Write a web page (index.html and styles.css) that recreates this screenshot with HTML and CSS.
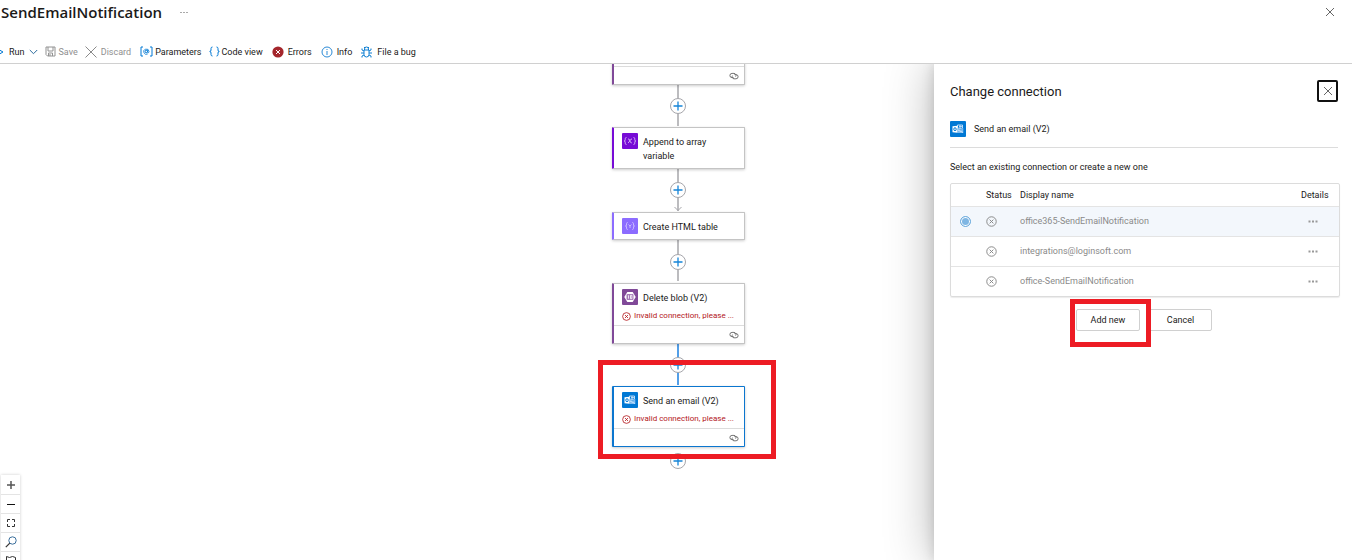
FILE: index.html
```html
<!DOCTYPE html>
<html lang="en">
<head>
<meta charset="utf-8">
<title>SendEmailNotification</title>
<link rel="stylesheet" href="styles.css">
</head>
<body>
<svg class="defs" aria-hidden="true">
  <symbol id="i-link" viewBox="0 0 10 8"><path d="M4.600 5.600H3A2 2 0 0 1 3 1.400h2a2 2 0 0 1 1.600 3.200M5.400 2.600H7a2 2 0 0 1 0 4.200H5A2 2 0 0 1 3.500 3.600" fill="none" stroke="#666" stroke-width=".9"/></symbol>
  <symbol id="i-fail" viewBox="0 0 10 10"><circle cx="5" cy="5" r="4.300" fill="none" stroke="currentColor" stroke-width=".9"/><path d="M3.300 3.300l3.400 3.400M6.700 3.300L3.300 6.700" stroke="currentColor" stroke-width=".9"/></symbol>
  <symbol id="i-plus" viewBox="0 0 14 14"><path d="M7 2.500v9M2.500 7h9" stroke="#1584d8" stroke-width="1.300"/></symbol>
  <symbol id="i-close" viewBox="0 0 10 10"><path d="M1 1l8 8M9 1L1 9" stroke="currentColor" stroke-width="1"/></symbol>
  <symbol id="i-outlook" viewBox="0 0 16 16"><rect width="16" height="16" rx="1" fill="#0078d4"/><path d="M7.500 4h5v3.200h-5z" fill="none" stroke="#cfe6fa" stroke-width=".9"/><path d="M7.500 7l2.700 2L13.300 7v5H7.500z" fill="#7fbcf0"/><path d="M9 5.500h3M8 9l5 2.500M10 4v5" stroke="#e8f4ff" stroke-width=".7"/><path d="M2.500 5.200L7.500 4.700v7L2.500 11.200z" fill="#fff"/><ellipse cx="5" cy="8.200" rx="1.200" ry="1.500" fill="none" stroke="#0078d4" stroke-width="1"/></symbol>
</svg>
<header class="top">
  <h1 class="title">SendEmailNotification</h1>
  <button class="plain more" aria-label="More options"><svg width="9" height="3" viewBox="0 0 9 3" fill="#aaa"><path d="M0 1h2v1H0zM3 1h2v1H3zM6 1h2v1H6z"/></svg></button>
  <button class="plain close-top" aria-label="Close"><svg width="10" height="10"><use href="#i-close"/></svg></button>
</header>
<nav class="toolbar">
  <button class="plain tool run"><svg width="4" height="10" viewBox="0 0 4 10"><path d="M-4 1l7 4-7 4" fill="none" stroke="#0078d4"/></svg>Run<svg class="chev" width="9" height="6" viewBox="0 0 9 6"><path d="M.8 1l3.700 3.700L8.200 1" fill="none" stroke="#2b6a9c"/></svg></button>
  <button class="plain tool save" disabled><svg width="11" height="11" viewBox="0 0 11 11"><path d="M1 1h9v9H2.500L1 8.500zM3 1v4h5V1M3.500 10V7h4v3M5 8v2" fill="none" stroke="#929292"/></svg>Save</button>
  <button class="plain tool discard" disabled><svg width="12" height="12" viewBox="0 0 12 12"><path d="M.5.500l11 11M11.500.500l-11 11" stroke="#8a8a8a"/></svg>Discard</button>
  <button class="plain tool params"><svg width="13" height="11" viewBox="0 0 13 11" fill="none" stroke="#0078d4"><path d="M3 1H1v9h2M10 1h2v9h-2"/><circle cx="6.300" cy="5.500" r="1.200"/><path d="M7.700 4v2.200c.2.900 1.300.6 1.300-.7a2.600 2.600 0 1 0-1.200 2.400" stroke-width=".8"/></svg>Parameters</button>
  <button class="plain tool code"><svg width="11" height="11" viewBox="0 0 11 11"><path d="M3.500 1Q2 1 2 2.500V4Q2 5.500.7 5.500 2 5.500 2 7v1.500Q2 10 3.500 10M7.500 1Q9 1 9 2.500V4q0 1.500 1.300 1.500Q9 5.500 9 7v1.500Q9 10 7.500 10" fill="none" stroke="#0078d4"/></svg>Code view</button>
  <button class="plain tool errors"><svg width="12" height="12" viewBox="0 0 12 12"><circle cx="6" cy="6" r="5.600" fill="#a4262c"/><path d="M4 4l4 4M8 4L4 8" stroke="#fff"/></svg>Errors</button>
  <button class="plain tool info"><svg width="12" height="12" viewBox="0 0 12 12"><circle cx="6" cy="6" r="5" fill="none" stroke="#2b8ad6"/><path d="M6 5v4M6 3v1" stroke="#2b8ad6"/></svg>Info</button>
  <button class="plain tool bug"><svg width="11" height="12" viewBox="0 0 11 12" fill="none" stroke="#0f7fd2"><path d="M3 4h5v4.500a2.500 2.500 0 0 1-5 0zM3.500 4V3a2 2 0 0 1 4 0v1M3 1l1 1M8 1L7 2M3 5L1 4V2.500M8 5l2-1V2.500M0 7h3M8 7h3M3 9l-2 1v1.500M8 9l2 1v1.500"/></svg>File a bug</button>
</nav>
<div class="work">
  <main class="canvas">
    <svg class="edges" width="900" height="420" fill="none" stroke="#a6a6ab" stroke-width="1">
      <path d="M678 21v41M678 105v42M678 176v41" stroke-width="1.500"/>
      <path d="M674.500 143l3.500 3.500 3.500-3.500"/>
      <path d="M678 280v41" stroke="#1a7fe0" stroke-width="1.500"/>
    </svg>
    <article class="node blob n1"><footer><svg width="10" height="8"><use href="#i-link"/></svg></footer></article>
    <button class="plain add a1" aria-label="Add step"><svg width="14" height="14"><use href="#i-plus"/></svg></button>
    <article class="node append n2"><div class="head"><svg width="16" height="16" viewBox="0 0 16 16"><rect width="16" height="16" rx="1" fill="#770bd6"/><path d="M4.500 4.500q-1.300 0-1.300 1.300v1.100Q3.200 8 2.200 8q1 0 1 1.100v1.100q0 1.300 1.300 1.300M11.500 4.500q1.300 0 1.300 1.300v1.100q0 1.100 1 1.100-1 0-1 1.100v1.100q0 1.300-1.300 1.300M6 6q1-.5 1.500 1l1 2.200q.5 1.200 1.300.6M10 6q-1-.4-2 1.500T6 10" fill="none" stroke="#d9b8f5" stroke-width=".9"/></svg><span>Append to array variable</span></div></article>
    <button class="plain add a2" aria-label="Add step"><svg width="14" height="14"><use href="#i-plus"/></svg></button>
    <article class="node html n3"><div class="head"><svg width="16" height="16" viewBox="0 0 16 16"><rect width="16" height="16" rx="1" fill="#8c6cff"/><path d="M5.700 4.500q-1.200 0-1.200 1.200V7q0 1-1 1 1 0 1 1v1.300q0 1.200 1.200 1.200M10.300 4.500q1.200 0 1.200 1.200V7q0 1 1 1-1 0-1 1v1.300q0 1.200-1.200 1.200M6.500 6.500L8 8l1.500-1.500M8 8v2" fill="none" stroke="#cfc2ff" stroke-width=".9"/></svg><span>Create HTML table</span></div></article>
    <button class="plain add a3" aria-label="Add step"><svg width="14" height="14"><use href="#i-plus"/></svg></button>
    <article class="node blob n4"><div class="head"><svg width="16" height="16" viewBox="0 0 16 16"><rect width="16" height="16" rx="1" fill="#804998"/><path d="M5.300 3h5.400l3 5-3 5H5.300l-3-5z" fill="#fff"/><rect x="4.500" y="5" width="7" height="6" rx="1" fill="#a57ab8"/><path d="M6.500 6.300v3.400M8.500 6.300h1.400v3.400H8.500z" stroke="#fff" stroke-width=".8" fill="none"/></svg><span>Delete blob (V2)</span></div><p class="error"><svg width="9" height="9"><use href="#i-fail"/></svg><span>Invalid connection, please ...</span></p><footer><svg width="10" height="8"><use href="#i-link"/></svg></footer></article>
    <button class="plain add a4" aria-label="Add step"><svg width="14" height="14"><use href="#i-plus"/></svg></button>
    <article class="node mail n5"><div class="head"><svg width="16" height="16"><use href="#i-outlook"/></svg><span>Send an email (V2)</span></div><p class="error"><svg width="9" height="9"><use href="#i-fail"/></svg><span>Invalid connection, please ...</span></p><footer><svg width="10" height="8"><use href="#i-link"/></svg></footer></article>
    <button class="plain add a5" aria-label="Add step"><svg width="14" height="14"><use href="#i-plus"/></svg></button>
    <div class="mark mark-node"></div>
    <div class="controls">
      <button class="plain" aria-label="Zoom in"><svg width="10" height="10" viewBox="0 0 10 10"><path d="M5 1v8M1 5h8" stroke="#555" stroke-width="1.500"/></svg></button>
      <button class="plain" aria-label="Zoom out"><svg width="10" height="10" viewBox="0 0 10 10"><path d="M1 5.500h8" stroke="#111"/></svg></button>
      <button class="plain" aria-label="Fit view"><svg width="10" height="10" viewBox="0 0 10 10"><path d="M1.500 4V1.500H4M6 1.500h2.500V4M8.500 6v2.500H6M4 8.500H1.500V6" fill="none" stroke="#333"/></svg></button>
      <button class="plain" aria-label="Search"><svg width="12" height="12" viewBox="0 0 12 12"><circle cx="7.500" cy="4.500" r="3.700" fill="none" stroke="#3b6f9c"/><path d="M4.800 7.200L.8 11.200" stroke="#333" stroke-width="1.200"/></svg></button>
      <button class="plain" aria-label="Toggle minimap"><svg width="10" height="12" viewBox="0 0 10 12"><path d="M.5 10V1.500l3 1 3-1 3 1V10l-3-1-3 1z" fill="none" stroke="#333"/></svg></button>
    </div>
  </main>
  <aside class="panel">
    <div class="panel-head"><h2>Change connection</h2><button class="plain close-panel" aria-label="Close panel"><svg width="10" height="10"><use href="#i-close"/></svg></button></div>
    <div class="action"><svg width="16" height="16"><use href="#i-outlook"/></svg>Send an email (V2)</div>
    <p class="prompt">Select an existing connection or create a new one</p>
    <div class="table-wrap">
    <table class="connections">
      <thead><tr><th class="pick"></th><th class="status">Status</th><th>Display name</th><th class="details">Details</th></tr></thead>
      <tbody>
        <tr class="selected"><td class="pick"><input type="radio" name="connection" aria-label="office365-SendEmailNotification" checked></td><td class="status"><svg width="11" height="11"><use href="#i-fail"/></svg></td><td>office365-SendEmailNotification</td><td class="details"><button class="plain" aria-label="Details"><svg width="10" height="3" viewBox="0 0 10 3"><path d="M.5.500h2v2h-2zM4 .5h2v2H4zM7.500.5h2v2h-2z" fill="#999"/></svg></button></td></tr>
        <tr><td class="pick"></td><td class="status"><svg width="11" height="11"><use href="#i-fail"/></svg></td><td>integrations@loginsoft.com</td><td class="details"><button class="plain" aria-label="Details"><svg width="10" height="3" viewBox="0 0 10 3"><path d="M.5.500h2v2h-2zM4 .5h2v2H4zM7.500.5h2v2h-2z" fill="#999"/></svg></button></td></tr>
        <tr><td class="pick"></td><td class="status"><svg width="11" height="11"><use href="#i-fail"/></svg></td><td>office-SendEmailNotification</td><td class="details"><button class="plain" aria-label="Details"><svg width="10" height="3" viewBox="0 0 10 3"><path d="M.5.500h2v2h-2zM4 .5h2v2H4zM7.500.5h2v2h-2z" fill="#999"/></svg></button></td></tr>
      </tbody>
    </table>
    </div>
    <div class="actions"><span class="add-new"><button class="btn">Add new</button><span class="mark mark-btn"></span></span><button class="btn">Cancel</button></div>
  </aside>
</div>
</body>
</html>
```
FILE: styles.css
```css
* { box-sizing: border-box; }
body {
  margin: 0;
  height: 100vh;
  display: flex;
  flex-direction: column;
  overflow: hidden;
  background: #fff;
  color: #1b1a19;
  font: 9px/14px Roboto, "Open Sans", sans-serif;
}
h1, h2, p { margin: 0; }
svg { display: block; flex: none; }
.defs { position: absolute; width: 0; height: 0; }
.plain { border: 0; padding: 0; margin: 0; background: none; font: inherit; color: inherit; }

.top { display: flex; align-items: center; height: 24px; padding: 0 17px 0 1px; }
.title { font: 600 15px/24px "Open Sans", sans-serif; }
.more { margin-left: 18px; }
.close-top { margin-left: auto; color: #666; }

.toolbar { display: flex; align-items: center; height: 40px; padding-top: 16px; border-bottom: 1px solid #d0d0d0; }
.tool { display: flex; align-items: center; gap: 5px; white-space: nowrap; }
.save, .code, .params { gap: 2px; }
.discard { gap: 4px; }
.save, .discard { color: #8f8f8f; }
.save, .discard, .code { margin-left: 7px; }
.params, .errors, .info, .bug { margin-left: 9px; }
.errors { gap: 4px; }
.info { gap: 4px; }

.work { flex: 1; min-height: 0; display: flex; }
.canvas { position: relative; flex: 1; min-width: 0; overflow: hidden; }
.edges { position: absolute; left: 0; top: 0; }
.node {
  position: absolute;
  left: 612px;
  width: 133px;
  background: #fff;
  border: 1px solid #c4c4c4;
  border-left: 2px solid;
  border-radius: 1px;
  box-shadow: 0 1px 3px rgba(0, 0, 0, .2);
}
.blob { border-left-color: #804998; }
.append { border-left-color: #770bd6; }
.html { border-left-color: #8c6cff; }
.mail { border: 1px solid #0b76cf; border-left-width: 2px; }
.n1 { top: -2px; padding-top: 3px; }
.n2 { top: 63px; }
.n3 { top: 148px; }
.n4 { top: 219px; }
.n5 { top: 322px; }
.head { display: flex; gap: 5px; padding: 5px 8px; }
.head span { padding-top: 2px; }
.append .head { padding-right: 24px; }
.n4 .head, .n5 .head { padding-bottom: 4px; }
.error { display: flex; align-items: center; gap: 3px; padding: 0 0 0 8px; height: 14px; margin-bottom: 2px; color: #b3161b; font-size: 8px; white-space: nowrap; }
.node footer { display: flex; justify-content: flex-end; align-items: center; height: 18px; padding-right: 5px; border-top: 1px solid #dcdcdc; }
.add { position: absolute; left: 670px; width: 16px; height: 16px; border: 1px solid #a6a6ab; border-radius: 50%; background: #fff; display: grid; place-items: center; }
.a1 { top: 34px; }
.a2 { top: 118px; }
.a3 { top: 190px; }
.a4 { top: 293px; }
.a5 { top: 389px; }
.mark { position: absolute; border: 5px solid #ed1c24; pointer-events: none; }
.mark-node { left: 598px; top: 296px; width: 178px; height: 99px; }
.controls { position: absolute; left: 1px; top: 411px; width: 19px; box-shadow: 0 0 3px rgba(0, 0, 0, .2); background: #fff; }
.controls button { display: grid; place-items: center; width: 100%; height: 19px; border-bottom: 1px solid #e4e4e4; }
.controls button:first-child { height: 20px; }

.panel { position: relative; width: 418px; padding: 16px 12px 0 16px; background: #fff; box-shadow: 0 0 46px rgba(0, 0, 0, .3), 0 0 12px rgba(0, 0, 0, .14); clip-path: inset(0 0 0 -60px); }
.panel-head { display: flex; justify-content: space-between; align-items: center; padding-right: 2px; }
.panel-head h2 { padding-top: 2px; font-size: 13px; line-height: 20px; font-weight: 400; }
.close-panel { display: grid; place-items: center; width: 21px; height: 22px; border: 2px solid #111; border-radius: 2px; color: #666; }
.action { display: flex; align-items: center; gap: 8px; height: 46px; margin-right: 2px; padding-top: 9px; border-bottom: 1px solid #dcdcdc; }
.prompt { padding: 12px 0 9px; }
.table-wrap { border: 1px solid #dcdcdc; border-radius: 2px; box-shadow: 0 1px 1px rgba(0, 0, 0, .08); }
.connections { width: 100%; table-layout: fixed; border-collapse: collapse; }
.connections th { height: 22px; padding: 0; font-weight: 400; text-align: left; }
.connections td { height: 30px; padding: 0; color: #8a8a8a; border-top: 1px solid #e4e4e4; }
.connections .selected td { background: #f3f7fc; }
.connections .pick { width: 35px; }
.connections .status { width: 34px; }
.connections .details { width: 38px; }
.details button { display: block; margin-left: 7px; }
.pick input { appearance: none; display: block; width: 11px; height: 11px; margin: 0 0 0 9px; border: 1px solid #6fadde; border-radius: 50%; background: #7fb6e3; box-shadow: inset 0 0 0 1px #fff; }
.actions { display: flex; justify-content: center; gap: 9px; padding: 12px 2px 0 0; }
.add-new { position: relative; }
.btn { min-width: 63px; height: 22px; padding: 0 8px; border: 1px solid #d0d0d0; border-radius: 2px; background: #fff; color: #1b1a19; font: inherit; display: block; }
.add-new .btn { min-width: 64px; }
.mark-btn { left: -6px; top: -10px; width: 81px; height: 48px; z-index: 1; }
```
